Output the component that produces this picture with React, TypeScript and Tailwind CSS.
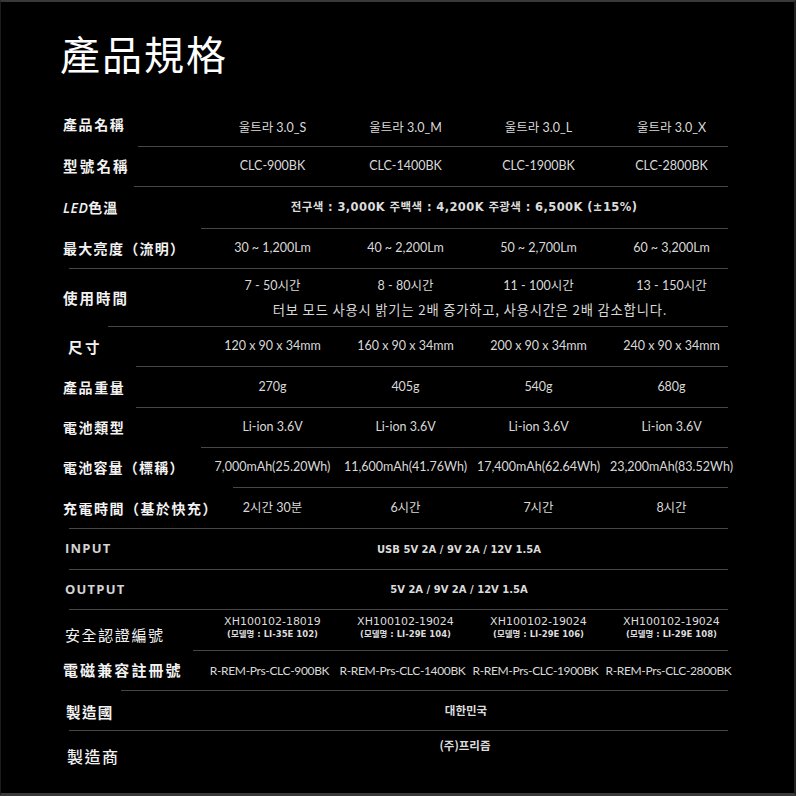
import React from "react";

const LBL = "font-['Noto_Sans_CJK_TC','Noto_Sans_CJK_KR',sans-serif] text-[#f2f2f2]";
const VAL = "font-['Lato','Noto_Sans_CJK_KR',sans-serif] text-[#d9d9d9] whitespace-nowrap text-center";
const DJV = "font-['DejaVu_Sans','Noto_Sans_CJK_KR',sans-serif] text-[#dcdcdc] whitespace-nowrap";
const GRID = "grid grid-cols-[143px_133px_133px_133px_133px] items-center";

function Divider({ cls }: { cls: string }) {
  return <div className={`h-px bg-[#474747] mr-[10px] ${cls}`} />;
}

function Four({ vals, cls = "text-[12.5px]" }: { vals: string[]; cls?: string }) {
  return (
    <>
      {vals.map((v, i) => (
        <div key={i} className={`${VAL} ${cls}`}>
          {v}
        </div>
      ))}
    </>
  );
}

export default function App() {
  return (
    <div className="w-[796px] h-[796px] bg-black border-t-2 border-b-[3px] border-t-[#383838] border-b-[#3a3a3a] border-l border-r-2 border-l-[#1c1c1c] border-r-[#222] flex flex-col overflow-hidden">
      <div className="h-[104px] pt-[31px] pl-[59px] shrink-0">
        <h1 className="font-['Noto_Sans_CJK_TC',sans-serif] text-[40px] leading-[40px] font-normal tracking-[2px] text-white">
          產品規格
        </h1>
      </div>

      <div className="ml-[62px] w-[675px] flex flex-col flex-1">
        {/* 1 */}
        <div className={`${GRID} h-[40px]`}>
          <div className={`${LBL} text-[14px] font-bold tracking-[1.6px] pb-[4px]`}>產品名稱</div>
          <Four vals={["울트라 3.0_S", "울트라 3.0_M", "울트라 3.0_L", "울트라 3.0_X"]} cls="text-[12.5px] pt-[4px]" />
        </div>
        <Divider cls="ml-[75px]" />

        {/* 2 */}
        <div className={`${GRID} h-[39px]`}>
          <div className={`${LBL} text-[14.5px] font-bold tracking-[2.2px] pb-[1px]`}>型號名稱</div>
          <Four vals={["CLC-900BK", "CLC-1400BK", "CLC-1900BK", "CLC-2800BK"]} />
        </div>
        <Divider cls="ml-[71px]" />

        {/* 3 */}
        <div className={`${GRID} h-[41px]`}>
          <div className={`${LBL} text-[14px] font-bold tracking-[1px]`}>
            <span className="font-['Open_Sans',sans-serif] italic font-semibold text-[14px] tracking-[0.5px]">LED</span>色溫
          </div>
          <div className={`${DJV} col-span-4 text-center text-[11.5px] font-bold tracking-[0.4px] pr-[16px]`}>
            전구색 : 3,000K 주백색 : 4,200K 주광색 : 6,500K (±15%)
          </div>
        </div>
        <Divider cls="ml-[138px]" />

        {/* 4 */}
        <div className={`${GRID} h-[39px]`}>
          <div className={`${LBL} text-[14px] font-bold tracking-[1.3px] whitespace-nowrap`}>最大亮度（流明）</div>
          <Four vals={["30 ~ 1,200Lm", "40 ~ 2,200Lm", "50 ~ 2,700Lm", "60 ~ 3,200Lm"]} />
        </div>
        <Divider cls="ml-[6px]" />

        {/* 5 */}
        <div className="grid grid-cols-[143px_532px] items-center h-[57px]">
          <div className={`${LBL} text-[14.5px] font-bold tracking-[2px]`}>使用時間</div>
          <div className="flex flex-col">
            <div className="grid grid-cols-4 h-[24px] items-center">
              <Four vals={["7 - 50시간", "8 - 80시간", "11 - 100시간", "13 - 150시간"]} />
            </div>
            <div className="font-['Noto_Sans_CJK_KR',sans-serif] text-[13.3px] tracking-[0.8px] text-[#d9d9d9] text-center whitespace-nowrap h-[22px] leading-[22px] pr-[4px]">
              터보 모드 사용시 밝기는 2배 증가하고, 사용시간은 2배 감소합니다.
            </div>
          </div>
        </div>
        <Divider cls="ml-[45px]" />

        {/* 6 */}
        <div className={`${GRID} h-[39px]`}>
          <div className={`${LBL} text-[14.5px] font-bold tracking-[2.5px] pl-[5px]`}>尺寸</div>
          <Four vals={["120 x 90 x 34mm", "160 x 90 x 34mm", "200 x 90 x 34mm", "240 x 90 x 34mm"]} />
        </div>
        <Divider cls="ml-[73px]" />

        {/* 7 */}
        <div className={`${GRID} h-[40px]`}>
          <div className={`${LBL} text-[14px] font-bold tracking-[1.6px]`}>產品重量</div>
          <Four vals={["270g", "405g", "540g", "680g"]} />
        </div>
        <Divider cls="ml-[73px]" />

        {/* 8 */}
        <div className={`${GRID} h-[39px]`}>
          <div className={`${LBL} text-[14px] font-bold tracking-[1.6px]`}>電池類型</div>
          <Four vals={["Li-ion 3.6V", "Li-ion 3.6V", "Li-ion 3.6V", "Li-ion 3.6V"]} />
        </div>
        <Divider cls="ml-[138px]" />

        {/* 9 */}
        <div className={`${GRID} h-[39px]`}>
          <div className={`${LBL} text-[14px] font-bold tracking-[1.2px] whitespace-nowrap`}>電池容量（標稱）</div>
          <Four vals={["7,000mAh(25.20Wh)", "11,600mAh(41.76Wh)", "17,400mAh(62.64Wh)", "23,200mAh(83.52Wh)"]} />
        </div>
        <Divider cls="ml-[170px]" />

        {/* 10 */}
        <div className={`${GRID} h-[40px]`}>
          <div className={`${LBL} text-[14px] font-bold tracking-[1.5px] whitespace-nowrap`}>充電時間（基於快充）</div>
          <Four vals={["2시간 30분", "6시간", "7시간", "8시간"]} />
        </div>
        <Divider cls="ml-[6px]" />

        {/* 11 */}
        <div className={`${GRID} h-[40px]`}>
          <div className="font-['Open_Sans',sans-serif] text-[13px] font-bold tracking-[1.2px] text-[#d4d4d4] pl-[2px]">INPUT</div>
          <div className={`${DJV} col-span-4 text-center text-[10px] font-bold pr-[26px]`}>
            USB 5V 2A / 9V 2A / 12V 1.5A
          </div>
        </div>
        <Divider cls="ml-[6px]" />

        {/* 12 */}
        <div className={`${GRID} h-[39px]`}>
          <div className="font-['Open_Sans',sans-serif] text-[13px] font-bold tracking-[1.2px] text-[#d4d4d4] pl-[2px]">OUTPUT</div>
          <div className={`${DJV} col-span-4 text-center text-[10px] font-bold pr-[26px]`}>
            5V 2A / 9V 2A / 12V 1.5A
          </div>
        </div>
        <Divider cls="ml-[6px]" />

        {/* 13 */}
        <div className={`${GRID} h-[40px]`}>
          <div className={`${LBL} text-[15px] font-normal tracking-[1.6px] pt-[10px] pl-[2px]`}>安全認證編號</div>
          {[
            ["XH100102-18019", "(모델명 : LI-35E 102)"],
            ["XH100102-19024", "(모델명 : LI-29E 104)"],
            ["XH100102-19024", "(모델명 : LI-29E 106)"],
            ["XH100102-19024", "(모델명 : LI-29E 108)"],
          ].map(([a, b], i) => (
            <div key={i} className="flex flex-col items-center pb-[6px]">
              <div className={`${DJV} text-[11px] leading-[14px]`}>{a}</div>
              <div className={`${DJV} text-[8.5px] font-bold leading-[11px]`}>{b}</div>
            </div>
          ))}
        </div>
        <Divider cls="ml-[130px]" />

        {/* 14 */}
        <div className={`${GRID} h-[39px]`}>
          <div className={`${LBL} text-[15px] font-bold tracking-[2.1px] whitespace-nowrap`}>電磁兼容註冊號</div>
          <Four
            vals={["R-REM-Prs-CLC-900BK", "R-REM-Prs-CLC-1400BK", "R-REM-Prs-CLC-1900BK", "R-REM-Prs-CLC-2800BK"]}
            cls="text-[12px] tracking-[-0.35px] pr-[6px]"
          />
        </div>
        <Divider cls="ml-[58px]" />

        {/* 15 */}
        <div className={`${GRID} h-[39px]`}>
          <div className={`${LBL} text-[14.5px] font-bold tracking-[1.4px] pl-[3px] pt-[3px]`}>製造國</div>
          <div className="col-span-4 text-center font-['Noto_Sans_CJK_KR',sans-serif] text-[11.5px] font-bold text-[#dcdcdc] pr-[12px]">
            대한민국
          </div>
        </div>
        <Divider cls="ml-[6px]" />

        {/* 16 */}
        <div className={`${GRID} flex-1 items-start`}>
          <div className={`${LBL} text-[16px] font-medium tracking-[1.5px] pl-[4px] pt-[13px]`}>製造商</div>
          <div className="col-span-4 text-center font-['Noto_Sans_CJK_KR',sans-serif] text-[11.5px] font-bold text-[#dcdcdc] pr-[14px] pt-[6px]">
            (주)프리즘
          </div>
        </div>
      </div>
    </div>
  );
}
